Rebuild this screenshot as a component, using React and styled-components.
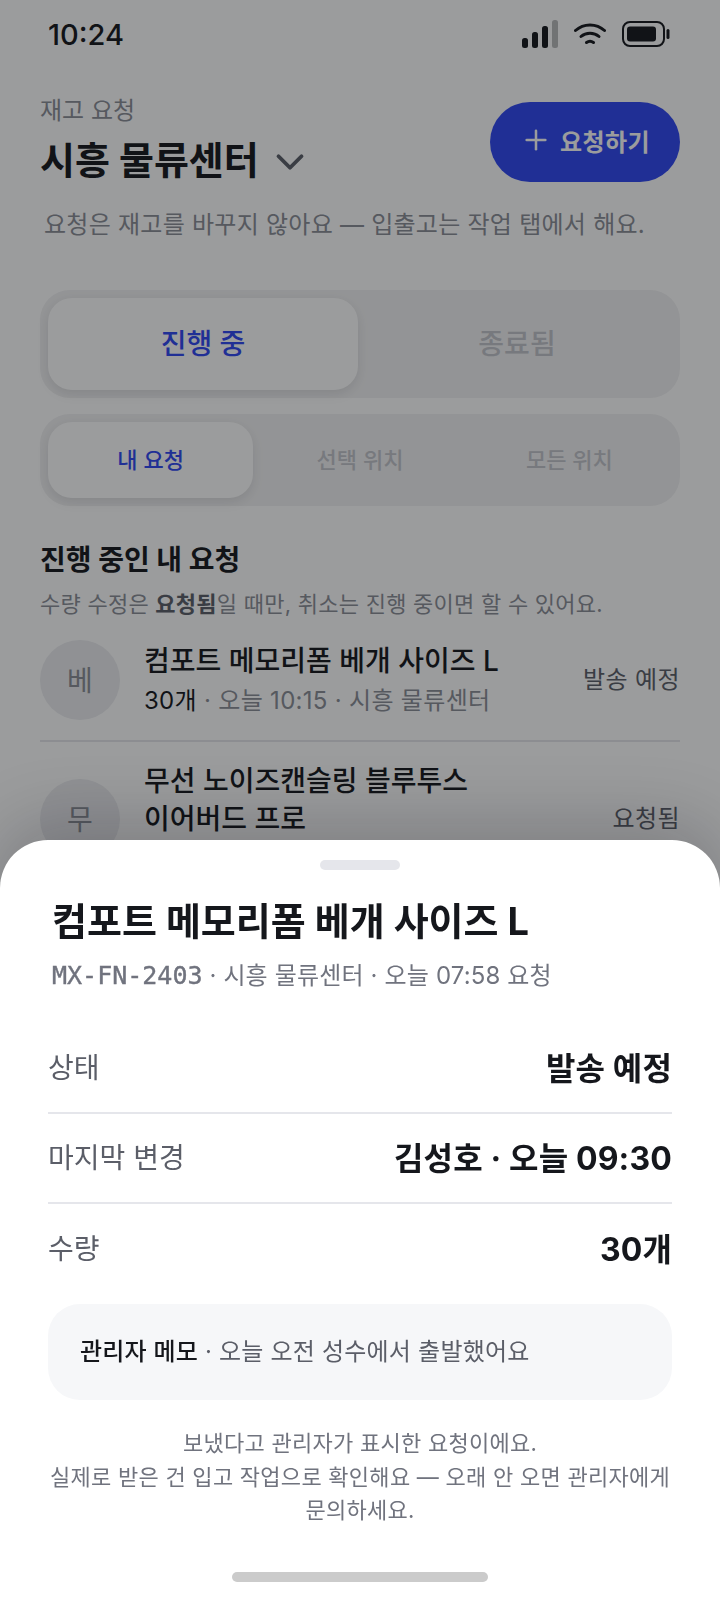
import React from "react";
import styled, { createGlobalStyle } from "styled-components";
import { Plus, ChevronDown } from "lucide-react";

const SANS = `Inter, "Noto Sans CJK KR", sans-serif`;
const MONO = `"DejaVu Sans Mono", "Noto Sans CJK KR", monospace`;

const GlobalStyle = createGlobalStyle`
  html, body {
    margin: 0;
    padding: 0;
    background: #fff;
  }
  * {
    box-sizing: border-box;
  }
`;

const Screen = styled.div`
  position: relative;
  width: 720px;
  height: 1600px;
  overflow: hidden;
  background: #ffffff;
  font-family: ${SANS};
  color: #15171c;
  word-break: keep-all;
`;

const StatusBar = styled.div`
  height: 68px;
  padding: 0 50px 0 48px;
  display: flex;
  align-items: center;
  justify-content: space-between;
`;

const Clock = styled.span`
  font-size: 29px;
  font-weight: 500;
`;

const StatusIcons = styled.div`
  display: flex;
  align-items: center;
`;

const Content = styled.div`
  padding: 28px 40px 0;
`;

const HeaderRow = styled.div`
  display: flex;
  justify-content: space-between;
  align-items: flex-start;
`;

const Eyebrow = styled.div`
  font-size: 24px;
  line-height: 30px;
  color: #8a8d96;
`;

const SiteButton = styled.div`
  display: flex;
  align-items: center;
  gap: 8px;
  margin-top: 9px;
  font-size: 38px;
  line-height: 50px;
  font-weight: 700;

  svg {
    margin-top: 4px;
  }
`;

const RequestButton = styled.div`
  width: 190px;
  height: 80px;
  margin-top: 6px;
  padding: 0 0 4px 0;
  border-radius: 40px;
  background: #2f47f2;
  color: #fff;
  display: flex;
  align-items: center;
  justify-content: center;
  gap: 8px;
  font-size: 24px;
  letter-spacing: 0.4px;
  font-weight: 600;
`;

const Hint = styled.div`
  margin: 23px 0 0 4px;
  font-size: 24px;
  letter-spacing: 0.25px;
  line-height: 34px;
  color: #8a8d96;
`;

const Segment = styled.div`
  display: flex;
  gap: 4px;
  padding: 8px;
  margin-top: ${(props) => props.$top}px;
  border-radius: 30px;
  background: #f2f2f3;
`;

const SegmentTab = styled.div`
  flex: 1;
  height: ${(props) => props.$height}px;
  padding-bottom: 4px;
  display: flex;
  align-items: center;
  justify-content: center;
  border-radius: 24px;
  font-size: ${(props) => props.$size}px;
  font-weight: 500;
  color: ${(props) => (props.$active ? "#2f47f2" : "#c2c4ca")};
  background: ${(props) => (props.$active ? "#ffffff" : "transparent")};
  box-shadow: ${(props) =>
    props.$active ? "0 4px 12px rgba(20, 22, 30, 0.1)" : "none"};
`;

const SectionTitle = styled.div`
  margin-top: 35px;
  font-size: 28px;
  line-height: 38px;
  font-weight: 700;
`;

const SectionHint = styled.div`
  margin-top: 9px;
  font-size: 22px;
  letter-spacing: 0.25px;
  line-height: 32px;
  color: #8a8d96;

  b {
    font-weight: 700;
    color: #5b5e68;
  }
`;

const RequestRow = styled.div`
  display: flex;
  align-items: center;
  gap: 24px;
  padding: 20px 0;
  border-bottom: ${(props) => (props.$last ? "none" : "2px solid #e5e6eb")};
`;

const Avatar = styled.div`
  flex: none;
  width: 80px;
  height: 80px;
  padding-bottom: 3px;
  border-radius: 50%;
  background: #ecedf0;
  color: #8a8d96;
  display: flex;
  align-items: center;
  justify-content: center;
  font-size: 28px;
  font-weight: 400;
`;

const RowBody = styled.div`
  flex: 1;
  min-width: 0;
`;

const RowTitle = styled.div`
  max-width: 370px;
  font-size: 28px;
  line-height: 38px;
  font-weight: 500;
`;

const RowMeta = styled.div`
  margin-top: 4px;
  font-size: 24px;
  letter-spacing: 0.3px;
  line-height: 34px;
  color: #8a8d96;

  b {
    font-weight: 400;
    color: #15171c;
  }
`;

const RowStatus = styled.div`
  flex: none;
  margin-bottom: 6px;
  font-size: 24px;
  letter-spacing: 0.4px;
  color: #5b5e68;
`;

const Scrim = styled.div`
  position: absolute;
  inset: 0;
  background: rgba(12, 14, 18, 0.41);
  backdrop-filter: blur(0.5px);
`;

const Sheet = styled.div`
  position: absolute;
  left: 0;
  right: 0;
  bottom: 0;
  height: 760px;
  padding: 20px 48px 0;
  background: #fff;
  border-radius: 48px 48px 0 0;
  box-shadow: 0 -16px 70px rgba(10, 12, 18, 0.2);
`;

const Handle = styled.div`
  width: 80px;
  height: 10px;
  margin: 0 auto;
  border-radius: 5px;
  background: #e5e6eb;
`;

const SheetTitle = styled.div`
  margin: 26px 0 0 4px;
  font-size: 38px;
  line-height: 50px;
  font-weight: 700;
`;

const SheetMeta = styled.div`
  margin: 13px 0 0 4px;
  font-size: 24px;
  letter-spacing: 0.15px;
  line-height: 34px;
  color: #70737e;
`;

const Sku = styled.span`
  font-family: ${MONO};
  font-size: 25px;
  letter-spacing: 0;
  -webkit-text-stroke: 0.4px #70737e;
`;

const DetailList = styled.div`
  margin-top: 31px;
`;

const DetailRow = styled.div`
  height: 90px;
  padding-bottom: 4px;
  display: flex;
  align-items: center;
  justify-content: space-between;
  border-bottom: ${(props) => (props.$last ? "none" : "2px solid #e5e6eb")};
`;

const DetailLabel = styled.span`
  font-size: 28px;
  color: #5b5e68;
`;

const DetailValue = styled.span`
  font-size: 32px;
  letter-spacing: 0.15px;
  font-weight: 700;
`;

const Memo = styled.div`
  height: 96px;
  margin-top: 10px;
  padding: 0 32px 5px;
  display: flex;
  align-items: center;
  border-radius: 32px;
  background: #f6f7f9;
  font-size: 24px;
  letter-spacing: 0.2px;
  color: #5b5e68;

  b {
    font-weight: 500;
    color: #15171c;
  }
`;

const Note = styled.div`
  margin-top: 27px;
  text-align: center;
  font-size: 22px;
  letter-spacing: 0.27px;
  line-height: 33.6px;
  color: #70737e;
`;

const HomeIndicator = styled.div`
  position: absolute;
  left: 232px;
  bottom: 18px;
  width: 256px;
  height: 10px;
  border-radius: 5px;
  background: #cbcbcb;
`;

const SignalIcon = () => (
  <svg width="36" height="28" viewBox="0 0 36 28" fill="#15171c">
    <rect x="0" y="18" width="6" height="10" rx="2.5" />
    <rect x="10" y="12" width="6" height="16" rx="2.5" />
    <rect x="20" y="6" width="6" height="22" rx="2.5" />
    <rect x="30" y="0" width="6" height="28" rx="2.5" opacity="0.3" />
  </svg>
);

const WifiIcon = () => (
  <svg
    width="32"
    height="22"
    viewBox="0 0 32 22"
    fill="none"
    stroke="#15171c"
    strokeWidth="3"
    strokeLinecap="round"
    style={{ marginLeft: 16 }}
  >
    <path d="M1.5 7.5C9.5 0 22.5 0 30.5 7.5" />
    <path d="M7 13.5C12 9 20 9 25 13.5" />
    <path d="M12.5 19.5C14.5 18 17.5 18 19.5 19.5" />
  </svg>
);

const BatteryIcon = () => (
  <svg
    width="48"
    height="26"
    viewBox="0 0 48 26"
    fill="none"
    style={{ marginLeft: 16 }}
  >
    <rect x="1" y="1" width="41" height="24" rx="7" stroke="#15171c" strokeWidth="2" />
    <rect x="5" y="5.5" width="29" height="15" rx="3" fill="#15171c" />
    <rect x="44.5" y="8" width="3" height="10" rx="1.5" fill="#15171c" />
  </svg>
);

const App = () => {
  return (
    <Screen>
      <GlobalStyle />
      <StatusBar>
        <Clock>10:24</Clock>
        <StatusIcons>
          <SignalIcon />
          <WifiIcon />
          <BatteryIcon />
        </StatusIcons>
      </StatusBar>

      <Content>
        <HeaderRow>
          <div>
            <Eyebrow>재고 요청</Eyebrow>
            <SiteButton>
              시흥 물류센터
              <ChevronDown size={46} strokeWidth={2} color="#5b5e68" />
            </SiteButton>
          </div>
          <RequestButton>
            <Plus size={32} strokeWidth={1.9} />
            요청하기
          </RequestButton>
        </HeaderRow>
        <Hint>요청은 재고를 바꾸지 않아요 — 입출고는 작업 탭에서 해요.</Hint>

        <Segment $top={48}>
          <SegmentTab $height={92} $size={28} $active>
            진행 중
          </SegmentTab>
          <SegmentTab $height={92} $size={28}>
            종료됨
          </SegmentTab>
        </Segment>
        <Segment $top={16}>
          <SegmentTab $height={76} $size={22} $active>
            내 요청
          </SegmentTab>
          <SegmentTab $height={76} $size={22}>
            선택 위치
          </SegmentTab>
          <SegmentTab $height={76} $size={22}>
            모든 위치
          </SegmentTab>
        </Segment>

        <SectionTitle>진행 중인 내 요청</SectionTitle>
        <SectionHint>
          수량 수정은 <b>요청됨</b>일 때만, 취소는 진행 중이면 할 수 있어요.
        </SectionHint>

        <RequestRow>
          <Avatar>베</Avatar>
          <RowBody>
            <RowTitle>컴포트 메모리폼 베개 사이즈 L</RowTitle>
            <RowMeta>
              <b>30개</b> · 오늘 10:15 · 시흥 물류센터
            </RowMeta>
          </RowBody>
          <RowStatus>발송 예정</RowStatus>
        </RequestRow>
        <RequestRow $last>
          <Avatar>무</Avatar>
          <RowBody>
            <RowTitle>무선 노이즈캔슬링 블루투스 이어버드 프로</RowTitle>
            <RowMeta>
              <b>12개</b> · 오늘 09:48 · 시흥 물류센터
            </RowMeta>
          </RowBody>
          <RowStatus>요청됨</RowStatus>
        </RequestRow>
      </Content>

      <Scrim />

      <Sheet>
        <Handle />
        <SheetTitle>컴포트 메모리폼 베개 사이즈 L</SheetTitle>
        <SheetMeta>
          <Sku>MX-FN-2403</Sku> · 시흥 물류센터 · 오늘 07:58 요청
        </SheetMeta>
        <DetailList>
          <DetailRow>
            <DetailLabel>상태</DetailLabel>
            <DetailValue>발송 예정</DetailValue>
          </DetailRow>
          <DetailRow>
            <DetailLabel>마지막 변경</DetailLabel>
            <DetailValue>김성호 · 오늘 09:30</DetailValue>
          </DetailRow>
          <DetailRow $last>
            <DetailLabel>수량</DetailLabel>
            <DetailValue>30개</DetailValue>
          </DetailRow>
        </DetailList>
        <Memo>
          <span>
            <b>관리자 메모</b> · 오늘 오전 성수에서 출발했어요
          </span>
        </Memo>
        <Note>
          보냈다고 관리자가 표시한 요청이에요.
          <br />
          실제로 받은 건 입고 작업으로 확인해요 — 오래 안 오면 관리자에게
          <br />
          문의하세요.
        </Note>
      </Sheet>
      <HomeIndicator />
    </Screen>
  );
};

export default App;
